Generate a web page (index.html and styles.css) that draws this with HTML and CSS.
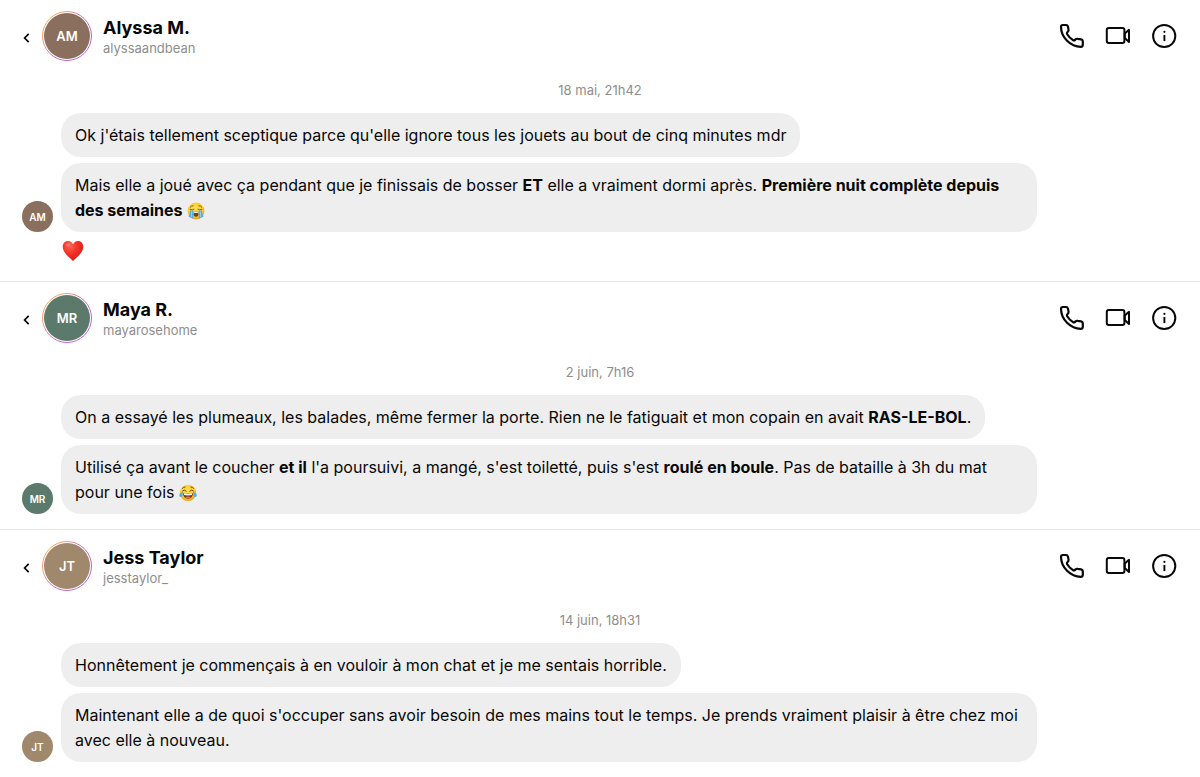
FILE: index.html
```html
<!DOCTYPE html>
<html lang="fr">
<head>
<meta charset="utf-8">
<meta name="viewport" content="width=device-width, initial-scale=1">
<title>Messages</title>
<link rel="stylesheet" href="styles.css">
</head>
<body>
<svg class="sprite" aria-hidden="true">
  <defs>
    <symbol id="back" viewBox="0 0 10 14"><path d="M6.7 2.8 2.6 7l4.1 4.2" fill="none" stroke="currentColor" stroke-width="1.7"/></symbol>
    <symbol id="phone" viewBox="0 0 26 26"><path d="M3.8 2H7C8 2 8.7 2.5 8.9 3.4L9.5 6.4C9.7 7.4 9.5 8 8.9 8.6L8.2 9.4C7.7 10 7.8 10.6 8.2 11.3C9.7 13.8 12 16 14.2 17.2C14.9 17.6 15.4 17.5 15.8 17.1L16.5 16.4C17.2 15.8 17.9 15.6 18.8 15.8L22 16.4C23.2 16.7 23.8 17.3 23.8 18.3V21.8C23.8 23.2 23.1 23.8 21.9 23.8C11.5 23.8 2 14.4 2 3.8C2 2.6 2.6 2 3.8 2Z" fill="none" stroke="currentColor" stroke-width="2.2" stroke-linejoin="round"/></symbol>
    <symbol id="video" viewBox="0 0 26 20"><g fill="none" stroke="currentColor" stroke-width="2" stroke-linejoin="round"><rect x="1.8" y="1.9" width="17.6" height="15.2" rx="2"/><path d="M19.8 7.4 24 3.8V15.9L19.8 12.1Z"/></g></symbol>
    <symbol id="info" viewBox="0 0 26 26"><circle cx="13.2" cy="13" r="11.1" fill="none" stroke="currentColor" stroke-width="2"/><circle cx="13.4" cy="8.8" r="1.1" fill="currentColor"/><path d="M13.4 12v6.1" stroke="currentColor" stroke-width="1.9"/></symbol>
    <linearGradient id="ringColor" x1="0" y1="0.1" x2="1" y2="0.9"><stop offset="0" stop-color="#f5b04f"/><stop offset=".25" stop-color="#ef9d70"/><stop offset=".5" stop-color="#d965b5"/><stop offset="1" stop-color="#a866dc"/></linearGradient>
    <radialGradient id="face" cx=".45" cy=".35" r=".65"><stop offset="0" stop-color="#ffe14a"/><stop offset=".7" stop-color="#fcc72e"/><stop offset="1" stop-color="#e99b20"/></radialGradient>
    <radialGradient id="heartColor" cx=".35" cy=".25" r=".8"><stop offset="0" stop-color="#ff6656"/><stop offset=".45" stop-color="#f23428"/><stop offset="1" stop-color="#d71916"/></radialGradient>
    <symbol id="ring" viewBox="0 0 50 50"><circle cx="25" cy="25" r="24.5" fill="none" stroke="url(#ringColor)" stroke-width="1"/></symbol>
    <symbol id="cry" viewBox="0 0 18 18"><circle cx="9" cy="9" r="8.4" fill="url(#face)"/><path d="M3.3 5.2Q4.4 3.7 6.2 3.7M11.8 3.7Q13.6 3.7 14.7 5.2M3.2 7.5Q5.1 8.8 7 7.3M11 7.3Q12.9 8.8 14.8 7.5" fill="none" stroke="#805018" stroke-width=".9" stroke-linecap="round"/><ellipse cx="9" cy="12.1" rx="2.5" ry="2.6" fill="#75401f"/><path d="M6.9 10.4Q9 9 11.1 10.4L10.8 11H7.2Z" fill="#fff"/><path d="M3.2 8.4H6.5L6.1 16.4Q3.5 16.5 1.4 14.3Q2.8 12 3.2 8.4ZM11.5 8.4H14.8Q15.2 12 16.6 14.3Q14.5 16.5 11.9 16.4Z" fill="#50ade9"/><path d="M4.8 8.8 4.2 15.4M13.2 8.8 13.8 15.4" stroke="#a8def9" stroke-width=".8"/></symbol>
    <symbol id="joy" viewBox="0 0 18 18"><circle cx="9" cy="8.9" r="8.2" fill="url(#face)"/><path d="M3.3 4.3Q4.4 2.8 6.1 3M11.9 3Q13.6 2.8 14.7 4.3M3.4 7.1Q5 4.8 7.2 7M10.8 7Q13 4.8 14.6 7.1" fill="none" stroke="#7b491a" stroke-width="1" stroke-linecap="round"/><path d="M3.9 9.1Q9 10.1 14.1 9.1Q13.9 14.8 9 14.8Q4.1 14.8 3.9 9.1Z" fill="#76401e"/><path d="M4.6 9.3Q9 10.2 13.4 9.3L12.9 11.1Q9 11.8 5.1 11.1Z" fill="#fff"/><path d="M6 13.4Q9 11.5 12 13.4Q9 15.6 6 13.4Z" fill="#ee6547"/><path d="M4 7.9Q.7 8.6.2 10.8Q0 13 1.9 13Q3.8 12.6 4 7.9ZM14 7.9Q17.3 8.6 17.8 10.8Q18 13 16.1 13Q14.2 12.6 14 7.9Z" fill="#4dafe8"/></symbol>
    <symbol id="heart" viewBox="0 0 22 22"><path d="M11 21.1C8.7 18.2.7 13.2.7 6.7C.7 3.5 3 1.1 6 1.1C8.4 1.1 10.1 2.4 11 4.3C11.9 2.4 13.6 1.1 16 1.1C19 1.1 21.3 3.5 21.3 6.7C21.3 13.2 13.3 18.2 11 21.1Z" fill="url(#heartColor)"/><ellipse cx="5.8" cy="4.5" rx="2.6" ry="1.5" fill="#ff9b8b" opacity=".5" transform="rotate(-25 5.8 4.5)"/></symbol>
  </defs>
</svg>
<main>
  <section class="chat brown">
    <header class="bar">
      <button class="back" aria-label="Retour"><svg><use href="#back"/></svg></button>
      <div class="avatar"><svg class="ring"><use href="#ring"/></svg><span class="disc">AM</span></div>
      <div class="who"><h2>Alyssa M.</h2><p>alyssaandbean</p></div>
      <div class="actions">
        <button aria-label="Appel audio"><svg class="icon"><use href="#phone"/></svg></button>
        <button aria-label="Appel vidéo"><svg class="icon video"><use href="#video"/></svg></button>
        <button aria-label="Informations"><svg class="icon"><use href="#info"/></svg></button>
      </div>
    </header>
    <time>18 mai, 21h42</time>
    <div class="thread">
      <span class="mini">AM</span>
      <div class="messages">
        <p class="bubble">Ok j'étais tellement sceptique parce qu'elle ignore tous les jouets au bout de cinq minutes mdr</p>
        <p class="bubble">Mais elle a joué avec ça pendant que je finissais de bosser <b>ET</b> elle a vraiment dormi après. <b>Première nuit complète depuis des semaines</b> <svg class="emoji" role="img" aria-label="en larmes"><use href="#cry"/></svg></p>
      </div>
    </div>
    <div class="reaction"><svg role="img" aria-label="cœur"><use href="#heart"/></svg></div>
  </section>

  <section class="chat green">
    <header class="bar">
      <button class="back" aria-label="Retour"><svg><use href="#back"/></svg></button>
      <div class="avatar"><svg class="ring"><use href="#ring"/></svg><span class="disc">MR</span></div>
      <div class="who"><h2>Maya R.</h2><p>mayarosehome</p></div>
      <div class="actions">
        <button aria-label="Appel audio"><svg class="icon"><use href="#phone"/></svg></button>
        <button aria-label="Appel vidéo"><svg class="icon video"><use href="#video"/></svg></button>
        <button aria-label="Informations"><svg class="icon"><use href="#info"/></svg></button>
      </div>
    </header>
    <time>2 juin, 7h16</time>
    <div class="thread">
      <span class="mini">MR</span>
      <div class="messages">
        <p class="bubble">On a essayé les plumeaux, les balades, même fermer la porte. Rien ne le fatiguait et mon copain en avait <b>RAS-LE-BOL</b>.</p>
        <p class="bubble">Utilisé ça avant le coucher <b>et il</b> l'a poursuivi, a mangé, s'est toiletté, puis s'est <b>roulé en boule</b>. Pas de bataille à 3h du mat pour une fois <svg class="emoji" role="img" aria-label="pleure de rire"><use href="#joy"/></svg></p>
      </div>
    </div>
  </section>

  <section class="chat tan">
    <header class="bar">
      <button class="back" aria-label="Retour"><svg><use href="#back"/></svg></button>
      <div class="avatar"><svg class="ring"><use href="#ring"/></svg><span class="disc">JT</span></div>
      <div class="who"><h2>Jess Taylor</h2><p>jesstaylor_</p></div>
      <div class="actions">
        <button aria-label="Appel audio"><svg class="icon"><use href="#phone"/></svg></button>
        <button aria-label="Appel vidéo"><svg class="icon video"><use href="#video"/></svg></button>
        <button aria-label="Informations"><svg class="icon"><use href="#info"/></svg></button>
      </div>
    </header>
    <time>14 juin, 18h31</time>
    <div class="thread">
      <span class="mini">JT</span>
      <div class="messages">
        <p class="bubble">Honnêtement je commençais à en vouloir à mon chat et je me sentais horrible.</p>
        <p class="bubble">Maintenant elle a de quoi s'occuper sans avoir besoin de mes mains tout le temps. Je prends vraiment plaisir à être chez moi avec elle à nouveau.</p>
      </div>
    </div>
  </section>
</main>
</body>
</html>
```
FILE: styles.css
```css
* { box-sizing: border-box; }
body { margin: 0; background: #fff; color: #080808; font-family: Inter, "Liberation Sans", sans-serif; }
h2, p { margin: 0; }
svg { display: block; }
.sprite { position: absolute; width: 0; height: 0; }
button { padding: 0; border: 0; background: none; color: inherit; cursor: pointer; }

.chat { padding: 11px 22px 15px; }
.chat + .chat { border-top: 1px solid #e6e6e6; }
.brown { --tone: #8b6f5e; }
.green { --tone: #5c7a6b; }
.tan { --tone: #a0886c; }

.bar { display: flex; align-items: center; }
.back { width: 10px; margin-right: 10px; padding-top: 4px; }
.back svg { width: 10px; height: 14px; }
.avatar { position: relative; display: grid; place-items: center; width: 50px; height: 50px; }
.ring { position: absolute; inset: 0; width: 50px; height: 50px; }
.disc, .mini { display: grid; place-items: center; border-radius: 50%; background: var(--tone); color: #fff; font-weight: 600; }
.disc { width: 46px; height: 46px; font-size: 13px; }
.who { flex: 1; margin-left: 11px; padding-top: 2px; }
h2 { font-size: 18px; line-height: 22px; font-weight: 700; }
.who p { color: #8e8e8e; font-size: 13px; line-height: 18px; }
.actions { display: flex; align-items: center; gap: 20px; margin-right: 1px; }
.icon { width: 26px; height: 26px; }
.video { height: 20px; }

time { display: block; margin: 21px 0 14px; color: #8e8e8e; font-size: 13px; line-height: 17px; text-align: center; }
.thread { display: flex; align-items: flex-end; gap: 8px; }
.mini { flex: none; width: 31px; height: 31px; font-size: 10px; }
.messages { display: flex; flex: 1; flex-direction: column; align-items: flex-start; gap: 6px; }
.bubble { max-width: 87.4%; padding: 10px 14px 9px; border-radius: 20px; background: #eee; font-size: 16px; line-height: 25px; }
.bubble b { font-weight: 700; }
.emoji { display: inline-block; width: 18px; height: 18px; vertical-align: -4px; }
.reaction { padding: 8px 0 4px 40px; }
.reaction svg { width: 22px; height: 22px; }
```
